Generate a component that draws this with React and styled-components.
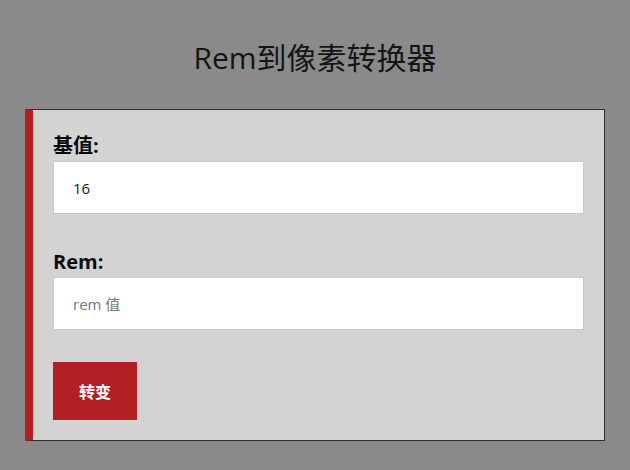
import React, { useState } from "react";
import styled, { createGlobalStyle } from "styled-components";

const GlobalStyle = createGlobalStyle`
  html, body {
    margin: 0;
    padding: 0;
    background: #8a8a8a;
    font-family: "Open Sans", "Noto Sans CJK SC", sans-serif;
  }
  * {
    box-sizing: border-box;
  }
`;

const Page = styled.div`
  padding-top: 38px;
  height: 470px;
`;

const Title = styled.h1`
  margin: 0 0 31px;
  text-align: center;
  font-size: 30px;
  line-height: 40px;
  font-weight: 400;
  color: #141414;
`;

const Card = styled.form`
  margin: 0 25px;
  background: #d3d3d3;
  border: 1px solid #2e2e2e;
  border-left: 8px solid #b21f24;
  padding: 22px 20px 20px;
  display: flex;
  flex-direction: column;
`;

const Field = styled.div`
  display: flex;
  flex-direction: column;
  margin-bottom: ${p => p.$gap}px;
`;

const Label = styled.label`
  font-size: 20px;
  line-height: 28px;
  font-weight: 700;
  color: #0a0a0a;
  margin-bottom: 1px;
`;

const Input = styled.input`
  height: 53px;
  border: 1px solid #c9c9c9;
  background: #fff;
  padding: 0 19px;
  font-family: "Open Sans", "Noto Sans CJK SC", sans-serif;
  font-size: 15px;
  color: #1a1a1a;
  outline: none;

  &::placeholder {
    color: #777;
  }
`;

const Button = styled.button`
  align-self: flex-start;
  width: 84px;
  height: 58px;
  border: none;
  background: #b21f24;
  color: #fff;
  font-family: "Open Sans", "Noto Sans CJK SC", sans-serif;
  font-size: 16px;
  font-weight: 700;
  cursor: pointer;
`;

export default function App() {
  const [base, setBase] = useState("16");
  const [rem, setRem] = useState("");

  return (
    <Page>
      <GlobalStyle />
      <Title>Rem到像素转换器</Title>
      <Card onSubmit={e => e.preventDefault()}>
        <Field $gap={34}>
          <Label htmlFor="base">基值:</Label>
          <Input id="base" value={base} onChange={e => setBase(e.target.value)} />
        </Field>
        <Field $gap={32}>
          <Label htmlFor="rem">Rem:</Label>
          <Input
            id="rem"
            placeholder="rem 值"
            value={rem}
            onChange={e => setRem(e.target.value)}
          />
        </Field>
        <Button type="submit">转变</Button>
      </Card>
    </Page>
  );
}
